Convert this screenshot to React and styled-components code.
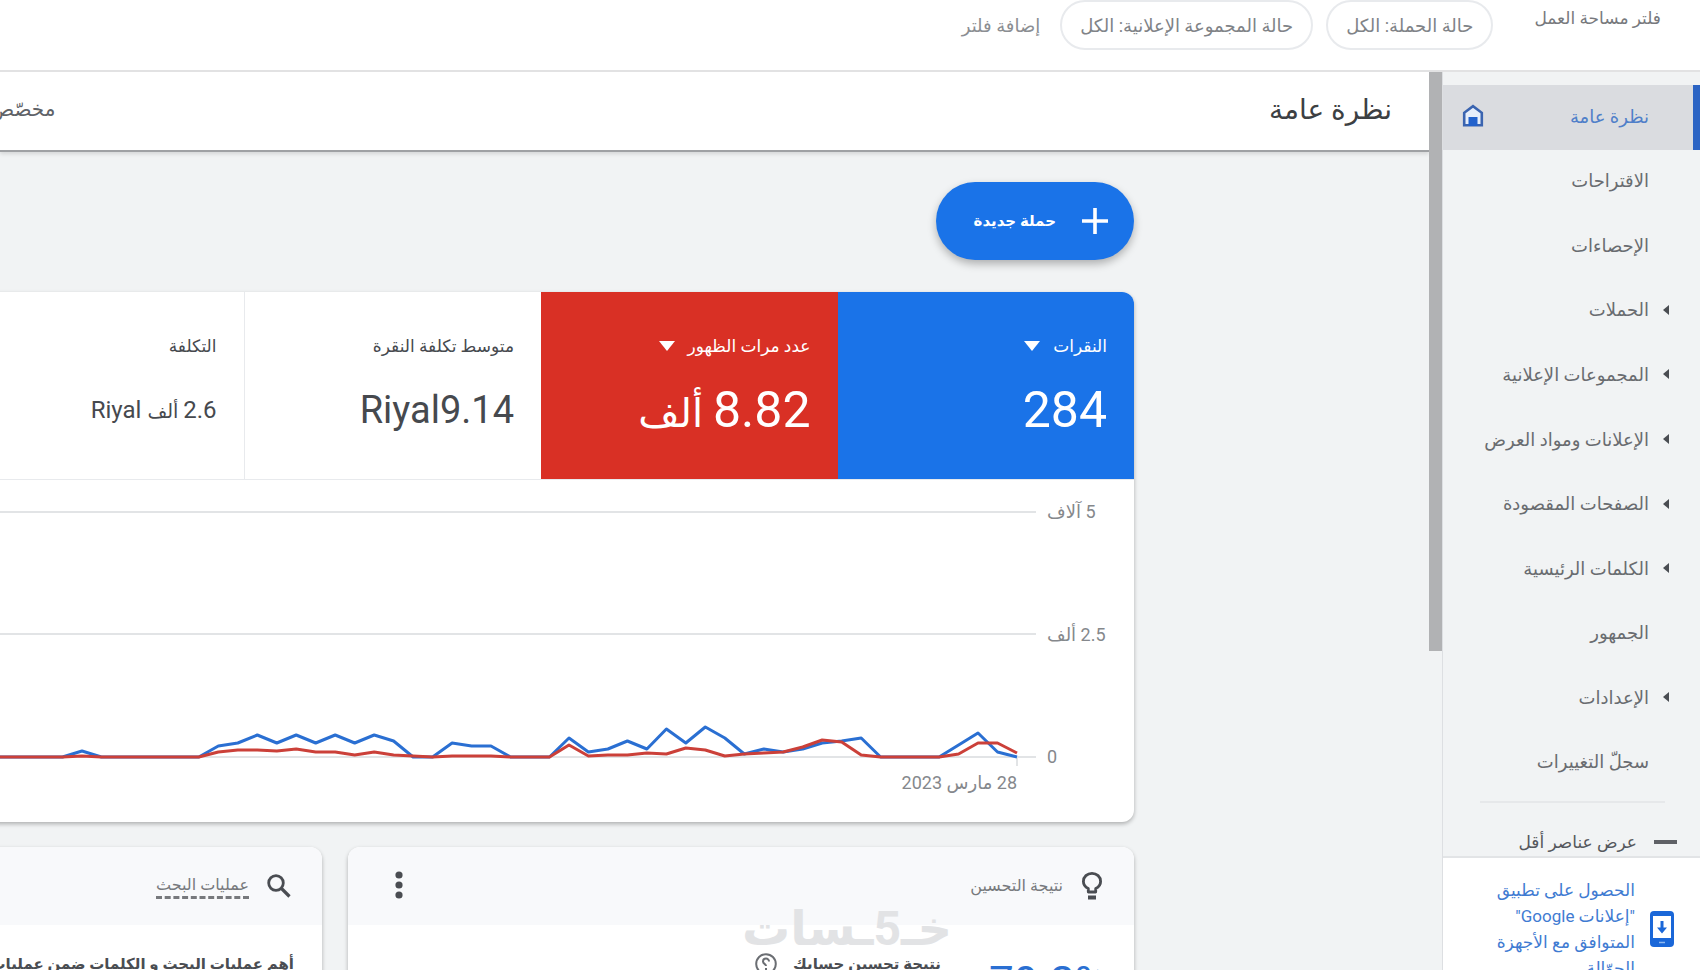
import React from "react";
import styled, { createGlobalStyle } from "styled-components";

const NAV_ITEMS = [
  { label: "نظرة عامة", active: true },
  { label: "الاقتراحات" },
  { label: "الإحصاءات" },
  { label: "الحملات", expandable: true },
  { label: "المجموعات الإعلانية", expandable: true },
  { label: "الإعلانات ومواد العرض", expandable: true },
  { label: "الصفحات المقصودة", expandable: true },
  { label: "الكلمات الرئيسية", expandable: true },
  { label: "الجمهور" },
  { label: "الإعدادات", expandable: true },
  { label: "سجلّ التغييرات" },
];

const METRICS = [
  { label: "النقرات", value: "284", color: "#1a73e8", menu: true, size: "50px" },
  { label: "عدد مرات الظهور", value: "8.82", unit: "ألف", color: "#d93025", menu: true, size: "50px" },
  { label: "متوسط تكلفة النقرة", value: "Riyal9.14", size: "38px" },
  { label: "التكلفة", value: "2.6", unit: "ألف", currency: "Riyal", size: "24px" },
];

// one value per day, newest first, in pixels above the zero line
const CLICKS = [
  0, 5, 24, 12, 0, 0, 0, 0, 19, 16, 14, 8, 5, 8, 3, 19, 30, 14, 28, 8, 16, 8, 5, 19,
  0, 0, 0, 11, 11, 14, 0, 0, 16, 22, 14, 22, 14, 22, 14, 22, 14, 11,
  0, 0, 0, 0, 0, 0, 6, 0, 0, 0, 0, 0, 0, 0,
];
const IMPRESSIONS = [
  4, 14, 14, 3, 0, 0, 0, 0, 2, 15, 17, 10, 5, 4, 3, 1, 7, 9, 3, 4, 2, 2, 1, 12,
  0, 0, 0, 1, 1, 1, 0, 1, 2, 5, 2, 5, 5, 8, 6, 7, 7, 5,
  0, 0, 0, 0, 0, 0, 1, 0, 0, 0, 0, 0, 0, 0,
];

const toPoints = (values) =>
  values.map((v, i) => `${(1071 - i * 19.48).toFixed(1)},${255 - v}`).join(" ");

const HomeIcon = () => (
  <svg width="24" height="24" viewBox="0 0 24 24" aria-hidden="true">
    <path d="M3.2 21.300V8.800L12 2.200l8.800 6.600v12.500z" fill="#e6eefa" stroke="#3a64b0" strokeWidth="2.600" />
    <path d="M7.500 13h9v9h-9z" fill="#2262cc" />
  </svg>
);

const PhoneIcon = () => (
  <svg width="24" height="36" viewBox="0 0 24 36" aria-hidden="true">
    <rect width="24" height="36" rx="4" fill="#1a67d8" />
    <path d="M3 5h18v22H3z" fill="#fff" />
    <path d="M10.500 10h3v6.500H17L12 22.500 7 16.500h3.500z" fill="#1a67d8" />
    <path d="M9 31.500h6" stroke="#8db8f0" strokeWidth="1.500" />
  </svg>
);

const BulbIcon = () => (
  <svg width="22" height="30" viewBox="0 0 22 30" aria-hidden="true">
    <path
      d="M7.300 21v-3.600C4.200 15.900 2.400 13.400 2.400 10.400 2.400 5.700 6.200 2.400 11 2.400s8.600 3.300 8.600 8c0 3-1.800 5.500-4.900 7V21z"
      fill="none"
      stroke="#4a4d52"
      strokeWidth="2.800"
      strokeLinejoin="round"
    />
    <path d="M7 26.500h8" stroke="#4a4d52" strokeWidth="4" />
  </svg>
);

const SearchIcon = () => (
  <svg width="24" height="24" viewBox="0 0 24 24" aria-hidden="true">
    <circle cx="9" cy="9" r="7.300" fill="none" stroke="#4a4d52" strokeWidth="2.800" />
    <path d="M14.500 14.500l8 8" stroke="#4a4d52" strokeWidth="3.200" />
  </svg>
);

const DotsIcon = () => (
  <svg width="8" height="28" viewBox="0 0 8 28" fill="#4a4d52" aria-hidden="true">
    <circle cx="4" cy="4" r="3.600" />
    <circle cx="4" cy="14" r="3.600" />
    <circle cx="4" cy="24" r="3.600" />
  </svg>
);

const PlusIcon = () => (
  <svg width="28" height="28" viewBox="0 0 28 28" aria-hidden="true">
    <path d="M14 1v26M1 14h26" stroke="#fff" strokeWidth="3.600" />
  </svg>
);

const HelpIcon = () => (
  <svg width="22" height="22" viewBox="0 0 22 22" fill="none" stroke="#6b6e73" strokeWidth="2" aria-hidden="true">
    <circle cx="11" cy="11" r="9.800" />
    <path d="M14 8.500a3 3 0 1 0-6 0c0 2.500 3 2.300 3 4.500M11 15v2" />
  </svg>
);

const App = () => {
  return (
    <Page dir="rtl">
      <GlobalStyle />
      <FilterBar>
        <FilterTitle>فلتر مساحة العمل</FilterTitle>
        <Chips>
          <Chip type="button">حالة الحملة: الكل</Chip>
          <Chip type="button">حالة المجموعة الإعلانية: الكل</Chip>
        </Chips>
        <AddFilter type="button">إضافة فلتر</AddFilter>
      </FilterBar>

      <Body>
        <Sidebar>
          <NavList>
            {NAV_ITEMS.map((item) => (
              <NavItem key={item.label} $active={item.active}>
                <NavLink href="#" $active={item.active}>
                  <NavArrow>{item.expandable && <Caret />}</NavArrow>
                  <NavText>{item.label}</NavText>
                  {item.active && <HomeIcon />}
                </NavLink>
              </NavItem>
            ))}
          </NavList>
          <Divider />
          <ShowLess type="button">
            <Minus />
            عرض عناصر أقل
          </ShowLess>
          <AppPromo href="#">
            <PhoneIcon />
            <span>الحصول على تطبيق "إعلانات Google" المتوافق مع الأجهزة الجوّالة</span>
          </AppPromo>
        </Sidebar>
        <ScrollTrack>
          <ScrollThumb />
        </ScrollTrack>

        <Main>
          <TitleBar>
            <h1>نظرة عامة</h1>
            <DateRange>مخصّص</DateRange>
          </TitleBar>
          <Content>
            <NewCampaign type="button">
              <PlusIcon />
              حملة جديدة
            </NewCampaign>

            <Card>
              <Metrics>
                {METRICS.map((m) => (
                  <Metric key={m.label} $color={m.color}>
                    <MetricLabel>
                      {m.label}
                      {m.menu && <DownCaret />}
                    </MetricLabel>
                    <MetricValue $size={m.size}>
                      {m.value}
                      {m.unit && <small> {m.unit}</small>}
                      {m.currency && ` ${m.currency}`}
                    </MetricValue>
                  </Metric>
                ))}
              </Metrics>
              <Chart>
                <YAxis>
                  <span>5 آلاف</span>
                  <span>2.5 ألف</span>
                  <span>0</span>
                </YAxis>
                <Plot>
                  <svg viewBox="0 0 1090 265" preserveAspectRatio="none">
                    <g stroke="#e2e4e6" strokeWidth="2">
                      <path d="M0 10H1090M0 132H1090M0 255H1090M1071 255v9" />
                    </g>
                    <g fill="none" strokeWidth="3" strokeLinejoin="round">
                      <polyline points={toPoints(CLICKS)} stroke="#2a6fd2" />
                      <polyline points={toPoints(IMPRESSIONS)} stroke="#cb4039" />
                    </g>
                  </svg>
                  <DateLabel>28 مارس 2023</DateLabel>
                </Plot>
              </Chart>
            </Card>

            <CardRow>
              <Card>
                <CardHeader>
                  <BulbIcon />
                  <CardTitle>نتيجة التحسين</CardTitle>
                  <IconButton type="button" aria-label="خيارات">
                    <DotsIcon />
                  </IconButton>
                </CardHeader>
                <ScoreBody>
                  <Score dir="ltr">79.2%</Score>
                  <BodyTitle>نتيجة تحسين حسابك</BodyTitle>
                  <HelpIcon />
                </ScoreBody>
                <Watermark>خـ5ـسات</Watermark>
              </Card>
              <Card>
                <CardHeader>
                  <SearchIcon />
                  <CardTitle $dashed>عمليات البحث</CardTitle>
                </CardHeader>
                <SearchBody>
                  <BodyTitle>أهم عمليات البحث و الكلمات ضمن عمليات البحث</BodyTitle>
                </SearchBody>
              </Card>
            </CardRow>
          </Content>
        </Main>
      </Body>
    </Page>
  );
};

const GlobalStyle = createGlobalStyle`
  * {
    box-sizing: border-box;
  }

  body {
    margin: 0;
    background: #f1f3f4;
    font-family: Roboto, "DejaVu Sans", sans-serif;
    color: #5f6368;
  }

  button {
    font-family: inherit;
    cursor: pointer;
  }

  a {
    text-decoration: none;
  }
`;

const Page = styled.div`
  height: 100vh;
  display: flex;
  flex-direction: column;
  overflow: hidden;
`;

const FilterBar = styled.header`
  display: flex;
  align-items: flex-start;
  height: 72px;
  padding-right: 39px;
  flex-shrink: 0;
  background: #fff;
  border-bottom: 2px solid #e2e2e3;
`;

const FilterTitle = styled.span`
  font-size: 17px;
  line-height: 36px;
  color: #77797d;
`;

const Chips = styled.div`
  display: flex;
  gap: 13px;
  margin-right: 41px;
`;

const Chip = styled.button`
  height: 50px;
  padding: 0 18px;
  border: 2px solid #e8eaed;
  border-radius: 25px;
  background: #fff;
  color: #808387;
  font-size: 18px;
`;

const AddFilter = styled.button`
  height: 50px;
  margin-right: 20px;
  padding: 0;
  border: none;
  background: none;
  color: #8b8e92;
  font-size: 18px;
`;

const Body = styled.div`
  flex: 1;
  min-height: 0;
  display: flex;
`;

const Sidebar = styled.aside`
  width: 258px;
  flex-shrink: 0;
  display: flex;
  flex-direction: column;
  border-left: 1px solid #dddfe2;
  background: #f1f3f4;
`;

const NavList = styled.ul`
  height: 710px;
  margin: 13px 0 0;
  padding: 0;
  flex-shrink: 0;
  display: flex;
  flex-direction: column;
  list-style: none;
`;

const NavItem = styled.li`
  flex: 1;
  display: flex;
  background: ${(p) => (p.$active ? "#dadce0" : "transparent")};
  border-right: 7px solid ${(p) => (p.$active ? "#2b64c4" : "transparent")};
`;

const NavLink = styled.a`
  flex: 1;
  display: flex;
  align-items: center;
  padding: 0 24px 2px 18px;
  font-size: 18px;
  color: ${(p) => (p.$active ? "#4f7fc9" : "#696c70")};
`;

const NavArrow = styled.span`
  width: 20px;
`;

const NavText = styled.span`
  flex: 1;
  white-space: nowrap;
`;

const Caret = styled.i`
  display: block;
  width: 6px;
  border: 5px solid transparent;
  border-left: none;
  border-right: 6px solid #4a4d52;
`;

const Divider = styled.hr`
  width: 185px;
  height: 2px;
  margin: 6px 35px 0 0;
  flex-shrink: 0;
  border: none;
  background: #e6e8ea;
`;

const ShowLess = styled.button`
  display: flex;
  align-items: center;
  gap: 17px;
  height: 53px;
  padding: 24px 23px 0 0;
  flex-shrink: 0;
  border: none;
  background: none;
  color: #55585d;
  font-size: 17px;
`;

const Minus = styled.i`
  width: 23px;
  height: 4px;
  background: #5f6166;
`;

const AppPromo = styled.a`
  flex: 1;
  min-height: 0;
  display: flex;
  align-items: flex-start;
  gap: 15px;
  padding: 19px 26px 0 50px;
  border-top: 2px solid #e2e4e6;
  background: #fff;
  color: #3f7bd2;
  font-size: 17px;
  line-height: 26px;
  overflow: hidden;

  svg {
    flex-shrink: 0;
    margin-top: 34px;
  }
`;

const ScrollTrack = styled.div`
  width: 13px;
  flex-shrink: 0;
`;

const ScrollThumb = styled.div`
  height: 579px;
  background: #b1b2b4;
`;

const Main = styled.main`
  flex: 1;
  min-width: 0;
  overflow: hidden;
`;

const TitleBar = styled.div`
  display: flex;
  align-items: center;
  justify-content: space-between;
  height: 80px;
  padding-right: 37px;
  padding-bottom: 4px;
  background: #fff;
  border-bottom: 2px solid #9fa1a4;
  box-shadow: 0 2px 4px rgba(0, 0, 0, 0.12);

  h1 {
    margin: 0;
    font-size: 28px;
    font-weight: 400;
    color: #3c4043;
  }
`;

const DateRange = styled.span`
  margin-left: -10px;
  font-size: 20px;
  color: #5f6368;
`;

const Content = styled.div`
  display: flex;
  flex-direction: column;
  align-items: stretch;
  margin-left: -54px;
  padding-top: 30px;
  padding-right: 295px;
`;

const NewCampaign = styled.button`
  display: flex;
  align-items: center;
  align-self: flex-start;
  gap: 25px;
  height: 78px;
  width: 198px;
  margin-bottom: 32px;
  padding: 0 25px;
  border: none;
  border-radius: 39px;
  background: #1a73e8;
  box-shadow: 0 4px 8px rgba(0, 0, 0, 0.28);
  color: #fff;
  font-size: 15px;
  font-weight: 700;
  white-space: nowrap;
`;

const Card = styled.section`
  position: relative;
  min-width: 0;
  border-radius: 12px;
  background: #fff;
  box-shadow: 0 2px 4px rgba(0, 0, 0, 0.28);
  overflow: hidden;
`;

const Metrics = styled.div`
  display: flex;
  height: 188px;
  border-bottom: 1px solid #e8eaed;
`;

const Metric = styled.div`
  flex: 1;
  min-width: 0;
  padding: 41px 27px 0;
  border-left: ${(p) => (p.$color ? "none" : "1px solid #e8eaed")};
  background: ${(p) => p.$color || "#fff"};
  color: ${(p) => (p.$color ? "#fff" : "#46494e")};
  white-space: nowrap;
`;

const MetricLabel = styled.div`
  display: flex;
  align-items: center;
  gap: 13px;
  font-size: 17px;
  line-height: 26px;
`;

const DownCaret = styled.i`
  border: 8px solid transparent;
  border-top: 10px solid #fff;
  border-bottom: none;
`;

const MetricValue = styled.div`
  margin-top: 19px;
  font-size: ${(p) => p.$size};
  line-height: 64px;

  small {
    font-size: 80%;
  }
`;

const Chart = styled.div`
  display: flex;
  padding: 22px 0 25px;
`;

const YAxis = styled.div`
  width: 98px;
  height: 265px;
  padding-left: 11px;
  flex-shrink: 0;
  display: flex;
  flex-direction: column;
  justify-content: space-between;
  align-items: flex-end;
  font-size: 18px;
  line-height: 20px;
  color: #85888c;
`;

const Plot = styled.div`
  flex: 1;
  min-width: 0;

  svg {
    display: block;
    width: 100%;
    height: 265px;
  }
`;

const DateLabel = styled.div`
  padding-right: 19px;
  margin-top: 2px;
  font-size: 18px;
  line-height: 28px;
  color: #85888c;
`;

const CardRow = styled.div`
  display: grid;
  grid-template-columns: 786fr 376fr;
  gap: 26px;
  margin-top: 25px;
`;

const CardHeader = styled.div`
  display: flex;
  align-items: center;
  height: 78px;
  padding: 0 31px 0 47px;
  background: #f8f9fb;
`;

const CardTitle = styled.h2`
  margin: 0 18px 0 auto;
  font-size: 16px;
  font-weight: 400;
  line-height: 22px;
  color: #77797d;
  border-bottom: ${(p) => (p.$dashed ? "3px dashed #77797d" : "none")};
`;

const IconButton = styled.button`
  padding: 0;
  border: none;
  background: none;
`;

const ScoreBody = styled.div`
  display: flex;
  gap: 16px;
  height: 120px;
  padding: 26px 32px 0;

  svg {
    flex-shrink: 0;
    margin-top: 2px;
  }
`;

const Score = styled.div`
  width: 113px;
  margin-left: 32px;
  padding-top: 4px;
  font-size: 44px;
  line-height: 56px;
  color: #2a6fd2;
`;

const SearchBody = styled.div`
  height: 120px;
  padding: 26px 28px 0;
`;

const BodyTitle = styled.h3`
  margin: 0;
  font-size: 15px;
  font-weight: 700;
  line-height: 26px;
  color: #4a4d52;
  white-space: nowrap;
`;

const Watermark = styled.div`
  position: absolute;
  top: 62px;
  right: 182px;
  font-size: 48px;
  font-weight: 700;
  line-height: 40px;
  color: #e2e3e5;
`;

export default App;
